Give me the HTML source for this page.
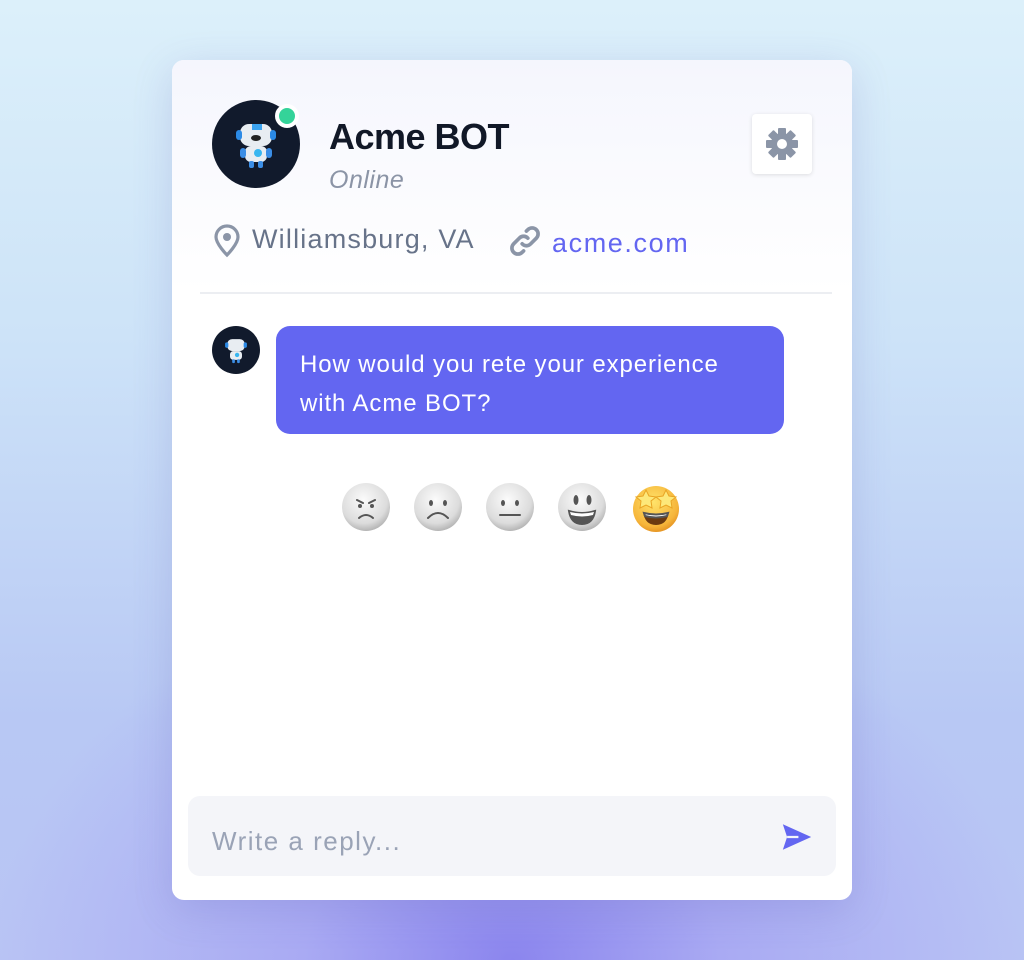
<!DOCTYPE html>
<html><head><meta charset="utf-8"><style>
*{margin:0;padding:0;box-sizing:border-box}
body{width:1024px;height:960px;overflow:hidden;font-family:"Liberation Sans",sans-serif;
background:radial-gradient(ellipse 520px 380px at 512px 960px,#8b85ee 0%,#a9aaf3 40%,rgba(190,200,245,0) 100%),linear-gradient(#dcf0fa 0%,#cde3f8 35%,#b8c8f4 75%,#b9c4f4 100%);position:relative}
.card{position:absolute;left:172px;top:60px;width:680px;height:840px;border-radius:12px;background:#fff;box-shadow:0 10px 40px rgba(90,90,180,.2);overflow:hidden}
.head{height:232px;background:linear-gradient(#f5f6fd,#fff)}
.av{position:absolute;left:40px;top:40px;width:88px;height:88px;border-radius:50%;background:#111a2c}
.dot{position:absolute;left:103px;top:44px;width:24px;height:24px;border-radius:50%;background:#34d399;border:4px solid #fff}
.name{position:absolute;left:157px;top:56px;font-size:36px;font-weight:bold;color:#111827;letter-spacing:-0.5px}
.on{position:absolute;left:157px;top:106px;font-size:25px;font-style:italic;color:#8b94a6;letter-spacing:0.5px}
.gear{position:absolute;left:580px;top:54px;width:60px;height:60px;background:#fff;border-radius:4px;box-shadow:0 1px 4px rgba(0,0,0,.12)}
.loc{position:absolute;left:80px;top:164px;font-size:27px;color:#677389;letter-spacing:1.2px}
.link{position:absolute;left:380px;top:168px;font-size:27px;color:#6366f1;letter-spacing:1.6px}
.hr{position:absolute;left:28px;right:20px;top:232px;height:2px;background:#eceef2}
.sav{position:absolute;left:40px;top:266px;width:48px;height:48px;border-radius:50%;background:#111a2c}
.bub{position:absolute;left:104px;top:266px;width:508px;height:108px;background:#6366f1;border-radius:14px;color:#fff;font-size:24px;line-height:39px;padding:19px 24px;letter-spacing:0.9px}
.emo{position:absolute;top:423px;left:168px}
.inp{position:absolute;left:16px;top:736px;width:648px;height:80px;background:#f4f5f9;border-radius:12px}
.ph{position:absolute;left:24px;top:30px;font-size:26px;color:#9aa3b6;letter-spacing:1.5px}
</style></head><body>
<div class="card">
<div class="head"></div>
<div class="av"><svg width="88" height="88" viewBox="0 0 88 88"><rect x="28" y="24" width="32" height="22" rx="9" fill="#e8edf2"/><rect x="24" y="30" width="6" height="10" rx="3" fill="#2b8ae6"/><rect x="58" y="30" width="6" height="10" rx="3" fill="#2b8ae6"/><rect x="40" y="24" width="10" height="6" fill="#3ba3ef"/><ellipse cx="44" cy="38" rx="5" ry="3" fill="#222"/><rect x="33" y="46" width="22" height="16" rx="6" fill="#e8edf2"/><circle cx="46" cy="53" r="4" fill="#38b6f0"/><rect x="28" y="48" width="6" height="10" rx="3" fill="#3b8ee6"/><rect x="54" y="48" width="6" height="10" rx="3" fill="#3b8ee6"/><rect x="37" y="61" width="5" height="7" rx="2" fill="#3b8ee6"/><rect x="46" y="61" width="5" height="7" rx="2" fill="#3b8ee6"/></svg></div>
<div class="dot"></div>
<div class="name">Acme BOT</div>
<div class="on">Online</div>
<div class="gear"><svg width="60" height="60" viewBox="0 0 60 60"><g transform="translate(30 30)" fill="#8b95a7"><circle r="11"/><g id="t"><rect x="-4" y="-16" width="8" height="7" rx="1"/></g><use href="#t" transform="rotate(45)"/><use href="#t" transform="rotate(90)"/><use href="#t" transform="rotate(135)"/><use href="#t" transform="rotate(180)"/><use href="#t" transform="rotate(225)"/><use href="#t" transform="rotate(270)"/><use href="#t" transform="rotate(315)"/><circle r="5" fill="#fff"/></g></svg></div>
<svg style="position:absolute;left:40px;top:164px" width="30" height="34" viewBox="0 0 30 34"><path d="M15 31C15 31 4 20 4 13A11 11 0 0 1 26 13C26 20 15 31 15 31Z" fill="none" stroke="#8b95a7" stroke-width="3.2"/><circle cx="15" cy="13" r="4" fill="#8b95a7"/></svg>
<div class="loc">Williamsburg, VA</div>
<svg style="position:absolute;left:336px;top:164px" width="34" height="34" viewBox="0 0 24 24"><g fill="none" stroke="#8b95a7" stroke-width="2.6" stroke-linecap="round"><path d="M10 14a4 4 0 0 0 6 0l4-4a4 4 0 0 0-6-6l-1 1"/><path d="M14 10a4 4 0 0 0-6 0l-4 4a4 4 0 0 0 6 6l1-1"/></g></svg>
<div class="link">acme.com</div>
<div class="hr"></div>
<div class="sav"><svg width="48" height="48" viewBox="0 0 88 88"><rect x="28" y="24" width="32" height="22" rx="9" fill="#e8edf2"/><rect x="24" y="30" width="6" height="10" rx="3" fill="#2b8ae6"/><rect x="58" y="30" width="6" height="10" rx="3" fill="#2b8ae6"/><rect x="33" y="46" width="22" height="16" rx="6" fill="#e8edf2"/><circle cx="46" cy="53" r="4" fill="#38b6f0"/><rect x="37" y="61" width="5" height="7" rx="2" fill="#3b8ee6"/><rect x="46" y="61" width="5" height="7" rx="2" fill="#3b8ee6"/></svg></div>
<div class="bub">How would you rete your experience<br>with Acme BOT?</div>
<svg class="emo" width="350" height="50" viewBox="0 0 350 50">
<defs><radialGradient id="g" cx=".45" cy=".35" r=".7"><stop offset="0" stop-color="#fbfbfb"/><stop offset=".7" stop-color="#dcdcdc"/><stop offset="1" stop-color="#a9a9a9"/></radialGradient>
<radialGradient id="y" cx=".45" cy=".35" r=".7"><stop offset="0" stop-color="#ffe36a"/><stop offset=".75" stop-color="#f6b53a"/><stop offset="1" stop-color="#e08a1c"/></radialGradient></defs>
<g fill="none" stroke="#555" stroke-width="2" stroke-linecap="round">
<circle cx="26" cy="24" r="24" fill="url(#g)" stroke="none"/>
<path d="M17 17l6 3M35 17l-6 3M19 35q7-6 14 0"/><circle cx="20" cy="23" r="2" fill="#555" stroke="none"/><circle cx="32" cy="23" r="2" fill="#555" stroke="none"/>
<circle cx="98" cy="24" r="24" fill="url(#g)" stroke="none"/>
<ellipse cx="91" cy="20" rx="2" ry="3" fill="#555" stroke="none"/><ellipse cx="105" cy="20" rx="2" ry="3" fill="#555" stroke="none"/><path d="M88 35q10-10 20 0"/>
<circle cx="170" cy="24" r="24" fill="url(#g)" stroke="none"/>
<ellipse cx="163" cy="20" rx="2" ry="3" fill="#555" stroke="none"/><ellipse cx="177" cy="20" rx="2" ry="3" fill="#555" stroke="none"/><path d="M160 32h20"/>
<circle cx="242" cy="24" r="24" fill="url(#g)" stroke="none"/>
<ellipse cx="236" cy="17" rx="2.5" ry="5" fill="#555" stroke="none"/><ellipse cx="249" cy="17" rx="2.5" ry="5" fill="#555" stroke="none"/><path d="M229 28q13 4 26 0q-2 13-13 13t-13-13z" fill="#555"/><path d="M230 29q12 3 24 0l-1 3q-11 3-22 0z" fill="#fff" stroke="none"/>
<circle cx="316" cy="26" r="23" fill="url(#y)" stroke="none"/>
<path d="M303 29q13 4 26 0q-2 13-13 13t-13-13z" fill="#6b3a10" stroke="none"/><path d="M304 30q12 3 24 0l-1 3q-11 3-22 0z" fill="#fff"/>
<path d="M306 7l3 6 7 1-5 4 1 7-6-3-6 3 1-7-5-4 7-1z M326 7l3 6 7 1-5 4 1 7-6-3-6 3 1-7-5-4 7-1z" fill="#fde87a" stroke="#e9a524" stroke-width="1"/>
</g></svg>
<div class="inp"><div class="ph">Write a reply...</div>
<svg style="position:absolute;left:592px;top:24px" width="34" height="34" viewBox="0 0 24 24"><path d="M2 3l20 9-20 9 3-9z" fill="#6366f1"/><path d="M5 12h8" stroke="#f4f5f9" stroke-width="1.6"/></svg></div>
</div>
</body></html>
